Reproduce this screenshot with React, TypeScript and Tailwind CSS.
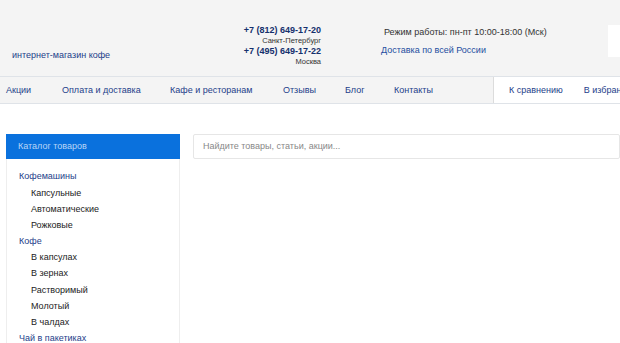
import React from "react";

const font = { fontFamily: '"Liberation Sans", Arial, sans-serif' };

export default function App() {
  const nav = [
    { t: "Акции", w: "w-[56px]" },
    { t: "Оплата и доставка", w: "w-[108px]" },
    { t: "Кафе и ресторанам", w: "w-[113px]" },
    { t: "Отзывы", w: "w-[62px]" },
    { t: "Блог", w: "w-[49px]" },
    { t: "Контакты", w: "w-[90px]" },
  ];
  const cats: { t: string; main?: boolean }[] = [
    { t: "Кофемашины", main: true },
    { t: "Капсульные" },
    { t: "Автоматические" },
    { t: "Рожковые" },
    { t: "Кофе", main: true },
    { t: "В капсулах" },
    { t: "В зернах" },
    { t: "Растворимый" },
    { t: "Молотый" },
    { t: "В чалдах" },
    { t: "Чай в пакетиках", main: true },
  ];
  return (
    <div className="w-[620px] h-[343px] overflow-hidden bg-white" style={font}>
      {/* header */}
      <div className="h-[77px] bg-[#f4f4f4] border-b border-[#dfe3e8] flex">
        <div className="w-[240px] shrink-0 pl-[12px] flex items-end pb-[15px]">
          <span className="text-[9px] leading-[11px] text-[#1d3e8a] whitespace-nowrap">интернет-магазин кофе</span>
        </div>
        <div className="w-[81px] shrink-0 pt-[25px] flex flex-col items-end">
          <span className="text-[9px] leading-[11px] font-bold text-[#14306d] whitespace-nowrap">+7 (812) 649-17-20</span>
          <span className="text-[7.5px] leading-[10px] text-[#333] whitespace-nowrap">Санкт-Петербург</span>
          <span className="text-[9px] leading-[11px] font-bold text-[#14306d] whitespace-nowrap">+7 (495) 649-17-22</span>
          <span className="text-[7.5px] leading-[10px] text-[#333] whitespace-nowrap">Москва</span>
        </div>
        <div className="ml-[60px] shrink-0 pt-[26px] flex flex-col">
          <span className="pl-[3px] text-[9px] leading-[12px] text-[#333] whitespace-nowrap">Режим работы: пн-пт 10:00-18:00 (Мск)</span>
          <span className="mt-[6px] text-[9px] leading-[12px] text-[#1d4ea0] whitespace-nowrap">Доставка по всей России</span>
        </div>
        <div className="ml-auto shrink-0 mt-[25px] w-[12px] h-[32px] bg-white" />
      </div>
      {/* nav */}
      <div className="h-[27px] flex border-b border-[#dfe3e8]">
        <div className="w-[494px] shrink-0 bg-[#f4f4f4] flex items-center pt-[2px] pl-[6px] border-r border-[#dcdcdc]">
          {nav.map((n) => (
            <span key={n.t} className={`${n.w} shrink-0 text-[9px] text-[#1d3e8a] whitespace-nowrap`}>
              {n.t}
            </span>
          ))}
        </div>
        <div className="flex-1 flex items-center pt-[2px] pl-[15px] gap-[21px] bg-white overflow-hidden">
          <span className="text-[9px] text-[#1d3e8a] whitespace-nowrap">К сравнению</span>
          <span className="text-[9px] text-[#1d3e8a] whitespace-nowrap">В избранное</span>
        </div>
      </div>
      {/* body */}
      <div className="flex pt-[30px] pl-[6px] gap-[13px]">
        <div className="w-[174px] shrink-0 border-x border-[#eeeeee]">
          <div className="h-[25px] bg-[#0a71dd] flex items-center pl-[12px] -mx-px">
            <span className="text-[9px] text-[#b9d5f6]">Каталог товаров</span>
          </div>
          <div className="pt-[10px]">
            {cats.map((c) => (
              <div
                key={c.t}
                className={`h-[16.2px] flex items-center text-[9px] whitespace-nowrap ${
                  c.main ? "pl-[12px] text-[#1d3e8a]" : "pl-[24px] text-[#222]"
                }`}
              >
                {c.t}
              </div>
            ))}
          </div>
        </div>
        <div className="flex-1">
          <div className="h-[25px] border border-[#e6e6e6] rounded-[2px] flex items-center pl-[9px]">
            <span className="text-[9px] text-[#888]">Найдите товары, статьи, акции...</span>
          </div>
        </div>
      </div>
    </div>
  );
}
